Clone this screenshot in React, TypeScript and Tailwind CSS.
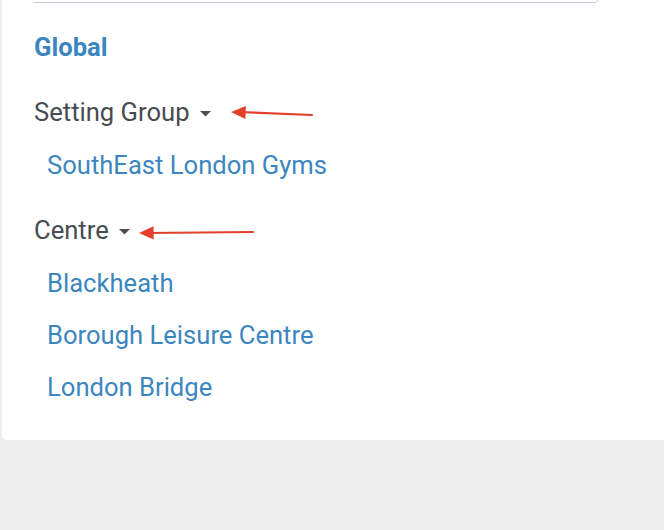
import React from "react";

const blue = "text-[#3c86c0]";

type Arrow = { x1: number; y1: number; x2: number; y2: number };

const RedArrow = ({ x1, y1, x2, y2 }: Arrow) => {
  const angle = Math.atan2(y1 - y2, x1 - x2);
  const len = 16;
  const spread = 0.42;
  const a = [x2 + len * Math.cos(angle - spread), y2 + len * Math.sin(angle - spread)];
  const b = [x2 + len * Math.cos(angle + spread), y2 + len * Math.sin(angle + spread)];
  return (
    <g>
      <line x1={x1} y1={y1} x2={x2 + 8} y2={y2} stroke="#e2402a" strokeWidth={2.2} strokeLinecap="round" />
      <polygon points={`${x2},${y2} ${a[0]},${a[1]} ${b[0]},${b[1]}`} fill="#e2402a" />
    </g>
  );
};

const Caret = () => (
  <svg width="11" height="6" viewBox="0 0 11 6" className="ml-[10px] mt-[3px]">
    <polygon points="0,0 11,0 5.5,5.5" fill="#4a4f56" />
  </svg>
);

const links = ["Blackheath", "Borough Leisure Centre", "London Bridge"];

export default function App() {
  return (
    <div className="min-h-[530px] w-full bg-[#eeeeee] pl-[2px] font-['Roboto',sans-serif]">
      <div className="relative rounded-bl-[5px] bg-white pb-[27px] pl-[32px]">
        <div className="flex h-[3px] items-end overflow-hidden">
          <div className="-ml-[6px] h-[30px] w-[572px] shrink-0 rounded-[6px] border border-[#c3ccd6]" />
        </div>

        <div className={`mt-[18px] text-[25.6px] font-bold leading-[52px] ${blue}`}>Global</div>

        <div className="mt-[13px] flex items-center text-[25.6px] leading-[52px] text-[#474c52]">
          Setting Group
          <Caret />
        </div>
        <div className={`mt-[1px] pl-[13px] text-[25.6px] leading-[52px] ${blue}`}>SouthEast London Gyms</div>

        <div className="mt-[13px] flex items-center text-[25.6px] leading-[52px] text-[#474c52]">
          Centre
          <Caret />
        </div>
        <div className="mt-[1px]">
          {links.map((l) => (
            <div key={l} className={`pl-[13px] text-[25.6px] leading-[52px] ${blue}`}>
              {l}
            </div>
          ))}
        </div>

        <svg className="pointer-events-none absolute left-[-2px] top-0" width="664" height="440">
          <RedArrow x1={312} y1={115} x2={231} y2={112} />
          <RedArrow x1={253} y1={232} x2={139} y2={233} />
        </svg>
      </div>
    </div>
  );
}
